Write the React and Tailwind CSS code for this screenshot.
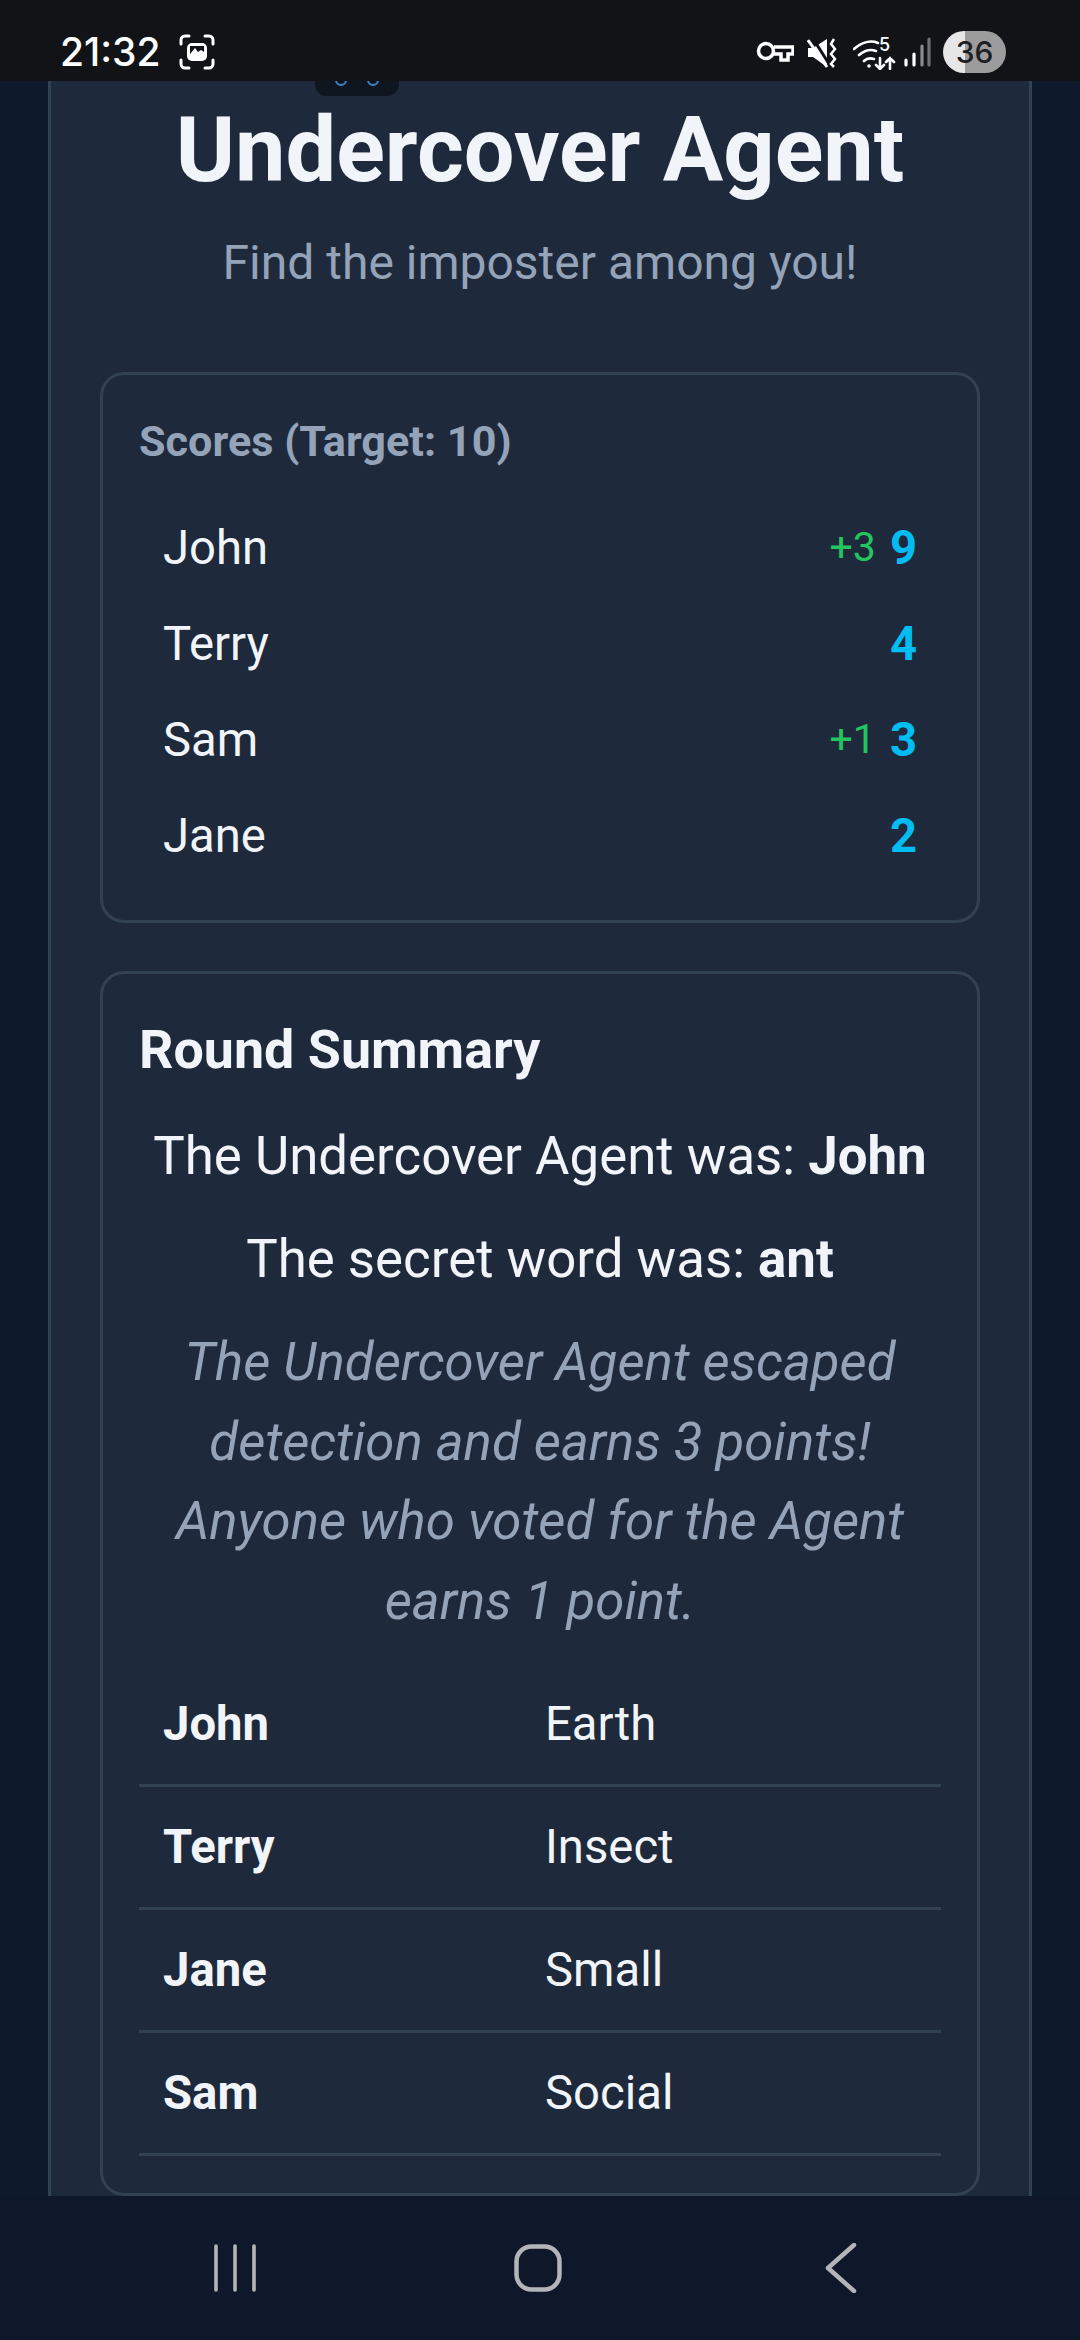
const font = { fontFamily: 'Roboto, sans-serif' };

function StatusBar() {
  return (
    <div className="relative z-10 h-[81px] shrink-0 bg-[#121317] flex items-start justify-between pl-[60px] pr-[74px]">
      <div className="flex items-center gap-[18px] pt-[29px]">
        <span className="text-[39px] leading-[46px] font-medium text-white" style={{ fontFamily: 'Inter, Roboto, sans-serif' }}>21:32</span>
        <svg width="36" height="36" viewBox="0 0 36 36" fill="none" stroke="white" strokeWidth="3" strokeLinecap="round">
          <path d="M2 10V6a4 4 0 0 1 4-4h4M26 2h4a4 4 0 0 1 4 4v4M34 26v4a4 4 0 0 1-4 4h-4M10 34H6a4 4 0 0 1-4-4v-4" />
          <rect x="8" y="9" width="20" height="18" rx="5" fill="white" stroke="none" />
          <path d="M11 12h14v6l-3-2-3 2-3-4-5 6z" fill="#121317" stroke="none" />
        </svg>
      </div>
      <div className="flex items-start pt-[31px]">
        <svg width="38" height="22" viewBox="0 0 38 22" fill="none" stroke="white" strokeWidth="3.5" className="mt-[10px] mr-[13px]">
          <circle cx="10" cy="10" r="7.5" />
          <path d="M18 6h19v7h-5v6h-7v-6h-7" />
        </svg>
        <svg width="30" height="30" viewBox="0 0 30 30" fill="white" className="mt-[7px] mr-[16px]">
          <path d="M1 10h5l14-9v28L6 19H1z" />
          <path d="M5 -1l19 30" stroke="#121317" strokeWidth="3" />
          <path d="M1 2l19 27" stroke="white" strokeWidth="3" />
          <path d="M27 1l-3 5 4 5-4 5 4 5-4 5 3 3" fill="none" stroke="white" strokeWidth="2.5" />
        </svg>
        <div className="relative w-[43px] h-[32px] mt-[7px] mr-[8px]">
          <svg width="43" height="32" viewBox="0 0 43 32" fill="none" stroke="white" strokeWidth="2.6" strokeLinecap="round">
            <path d="M1 11c8-7 17-9 24-6M6 17c6-5 12-6 17-4M11 23c3-3 7-3 10-2" />
            <circle cx="16" cy="28" r="1.8" fill="white" stroke="none" />
            <path d="M27 20v11M23 27l4 4 4-4M37 31V20M33 24l4-4 4 4" />
          </svg>
          <span className="absolute left-[26px] top-[-2px] text-[18px] leading-[18px] font-medium text-white" style={{ fontFamily: 'Inter, sans-serif' }}>5</span>
        </div>
        <svg width="28" height="30" viewBox="0 0 28 30" strokeWidth="3.2" strokeLinecap="round" fill="none" className="mt-[6px] mr-[11px]">
          <path d="M2 28v-5" stroke="white" />
          <path d="M10 28v-11" stroke="white" />
          <path d="M18 28V9" stroke="#8b8c8e" />
          <path d="M25 28V2" stroke="#6f7072" />
        </svg>
        <div className="relative w-[63px] h-[42px] rounded-full overflow-hidden flex">
          <div className="w-[22px] bg-[#e6e6e7]" />
          <div className="flex-1 bg-[#9c9c9d]" />
          <span className="absolute inset-0 flex items-center justify-center text-[30px] leading-none font-medium text-[#1d1e22]" style={{ fontFamily: 'Inter, sans-serif' }}>36</span>
        </div>
      </div>
    </div>
  );
}

function ScoreRow({ name, delta, score }) {
  return (
    <div className="h-[96px] flex items-center justify-between pl-6 pr-6">
      <span className="text-[47.25px] text-[#f1f5f9]">{name}</span>
      <div className="flex items-center gap-[14px]">
        {delta && <span className="text-[41px] text-[#22c55e]">{delta}</span>}
        <span className="text-[47.25px] font-bold text-[#00bcf0]">{score}</span>
      </div>
    </div>
  );
}

function ClueRow({ name, clue }) {
  return (
    <div className="h-[123px] grid grid-cols-[382px_1fr] items-center pl-6 border-b-[3px] border-[#334155]">
      <span className="text-[47.25px] font-bold text-[#f1f5f9]">{name}</span>
      <span className="text-[47.25px] text-[#f1f5f9]">{clue}</span>
    </div>
  );
}

export default function App() {
  return (
    <div className="relative w-[1080px] h-[2340px] overflow-hidden flex flex-col bg-[#0f172a]" style={font}>
      <StatusBar />
      <main className="flex-1 min-h-0 overflow-hidden px-12 bg-[#0e192c]">
        <div className="relative h-full bg-[#1e293b] border-x-[3px] border-[#334155] px-[49px] pt-[20px]">
          <div className="absolute left-[264px] top-0 w-[84px] h-[15px] bg-[#0f1620] rounded-b-[12px]">
            <svg width="84" height="15" viewBox="0 0 84 15" fill="none" stroke="#3b82c4" strokeWidth="2" className="absolute inset-0">
              <path d="M21 -1a5 5 0 0 0 10 0M53 -1a5 5 0 0 0 10 0" />
            </svg>
          </div>
          <h1 className="text-center text-[90px] leading-[100px] font-bold text-[#f1f5f9]">Undercover Agent</h1>
          <p className="mt-[34px] text-center text-[48px] leading-[56px] text-[#94a3b8]">Find the imposter among you!</p>
          <section className="mt-[81px] h-[551px] rounded-[24px] border-[3px] border-[#334155] pt-[42px] px-[36px]">
            <h2 className="text-[43.2px] leading-[50px] font-bold text-[#94a3b8]">Scores (Target: 10)</h2>
            <div className="mt-[33px]">
              <ScoreRow name="John" delta="+3" score="9" />
              <ScoreRow name="Terry" score="4" />
              <ScoreRow name="Sam" delta="+1" score="3" />
              <ScoreRow name="Jane" score="2" />
            </div>
          </section>
          <section className="mt-[48px] h-[1225px] rounded-[24px] border-[3px] border-[#334155] pt-[46px] px-[36px]">
            <h2 className="text-[53.8px] leading-[60px] font-bold text-[#f1f5f9]">Round Summary</h2>
            <p className="mt-[43px] text-center text-[52.8px] leading-[66px] text-[#f1f5f9]">The Undercover Agent was: <b>John</b></p>
            <p className="mt-[37px] text-center text-[52.8px] leading-[66px] text-[#f1f5f9]">The secret word was: <b>ant</b></p>
            <p className="mt-[31px] text-center text-[52.8px] leading-[79.5px] italic text-[#94a3b8]">The Undercover Agent escaped detection and earns 3 points! Anyone who voted for the Agent earns 1 point.</p>
            <div className="mt-[23px]">
              <ClueRow name="John" clue="Earth" />
              <ClueRow name="Terry" clue="Insect" />
              <ClueRow name="Jane" clue="Small" />
              <ClueRow name="Sam" clue="Social" />
            </div>
          </section>
        </div>
      </main>
      <nav className="h-[144px] shrink-0 bg-[#0f172a] grid grid-cols-3 items-center pl-[84px] pr-[88px]">
        <div className="flex justify-center">
          <svg width="44" height="48" viewBox="0 0 44 48" stroke="#b4b5b8" strokeWidth="3.6" strokeLinecap="round"><path d="M3 2v44M22 2v44M41 2v44" /></svg>
        </div>
        <div className="flex justify-center">
          <svg width="48" height="48" viewBox="0 0 48 48" fill="none" stroke="#b4b5b8" strokeWidth="4.5"><rect x="2.5" y="2.5" width="43" height="43" rx="15" /></svg>
        </div>
        <div className="flex justify-center">
          <svg width="32" height="50" viewBox="0 0 32 50" fill="none" stroke="#b4b5b8" strokeWidth="4.5" strokeLinecap="round" strokeLinejoin="round"><path d="M29 2L3 25l26 23" /></svg>
        </div>
      </nav>
    </div>
  );
}
